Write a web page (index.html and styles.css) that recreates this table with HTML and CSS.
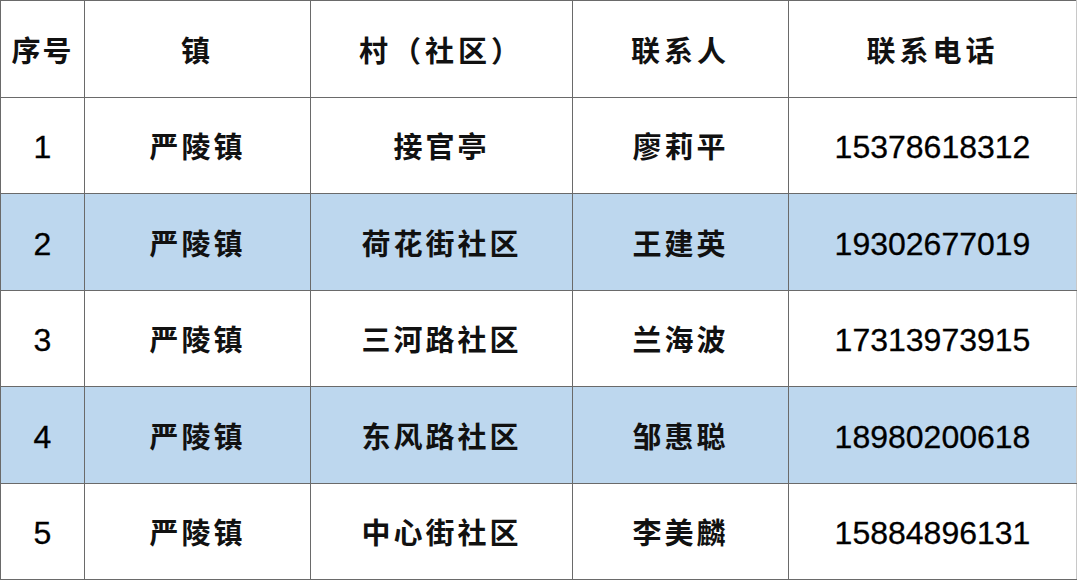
FILE: index.html
```html
<!DOCTYPE html>
<html lang="zh">
<head>
<meta charset="utf-8">
<link rel="stylesheet" href="styles.css">
</head>
<body>
<table class="contacts">
  <colgroup>
    <col class="c1"><col class="c2"><col class="c3"><col class="c4"><col class="c5">
  </colgroup>
  <thead>
    <tr class="r-head">
      <th>序号</th><th>镇</th><th>村（社区）</th><th>联系人</th><th>联系电话</th>
    </tr>
  </thead>
  <tbody>
    <tr class="r-a"><td class="num">1</td><td>严陵镇</td><td>接官亭</td><td>廖莉平</td><td class="num">15378618312</td></tr>
    <tr class="r-b alt"><td class="num">2</td><td>严陵镇</td><td>荷花街社区</td><td>王建英</td><td class="num">19302677019</td></tr>
    <tr class="r-a"><td class="num">3</td><td>严陵镇</td><td>三河路社区</td><td>兰海波</td><td class="num">17313973915</td></tr>
    <tr class="r-b alt"><td class="num">4</td><td>严陵镇</td><td>东风路社区</td><td>邹惠聪</td><td class="num">18980200618</td></tr>
    <tr class="r-b"><td class="num">5</td><td>严陵镇</td><td>中心街社区</td><td>李美麟</td><td class="num">15884896131</td></tr>
  </tbody>
</table>
</body>
</html>
```
FILE: styles.css
```css
html, body {
  margin: 0;
  padding: 0;
  background: #ffffff;
}
.contacts {
  border-collapse: collapse;
  table-layout: fixed;
  width: 1076px;
  font-family: "Noto Sans CJK SC", "Liberation Sans", sans-serif;
  color: #111111;
}
.c1 { width: 84px; }
.c2 { width: 226px; }
.c3 { width: 262px; }
.c4 { width: 216px; }
.c5 { width: 288px; }
.contacts th,
.contacts td {
  border: 1px solid #6a6a6a;
  text-align: center;
  vertical-align: middle;
  padding: 0;
  font-size: 29px;
  font-weight: 700;
  letter-spacing: 3px;
  line-height: 1;
}
.contacts th {
  letter-spacing: 4px;
}
.contacts th:first-child {
  letter-spacing: 2px;
}
.contacts tr > :last-child {
  border-right-color: #c8c8c8;
}
.contacts td.num {
  font-family: "Liberation Sans", Arial, sans-serif;
  font-weight: 400;
  font-size: 32px;
  letter-spacing: 0;
  color: #000000;
  padding-top: 3px;
  -webkit-text-stroke: 0.3px #000000;
}
.r-head { height: 97px; }
.r-a { height: 96px; }
.r-b { height: 97px; }
.alt td { background: #bdd7ee; }
.contacts tbody tr:last-child { height: 96px; }
```
